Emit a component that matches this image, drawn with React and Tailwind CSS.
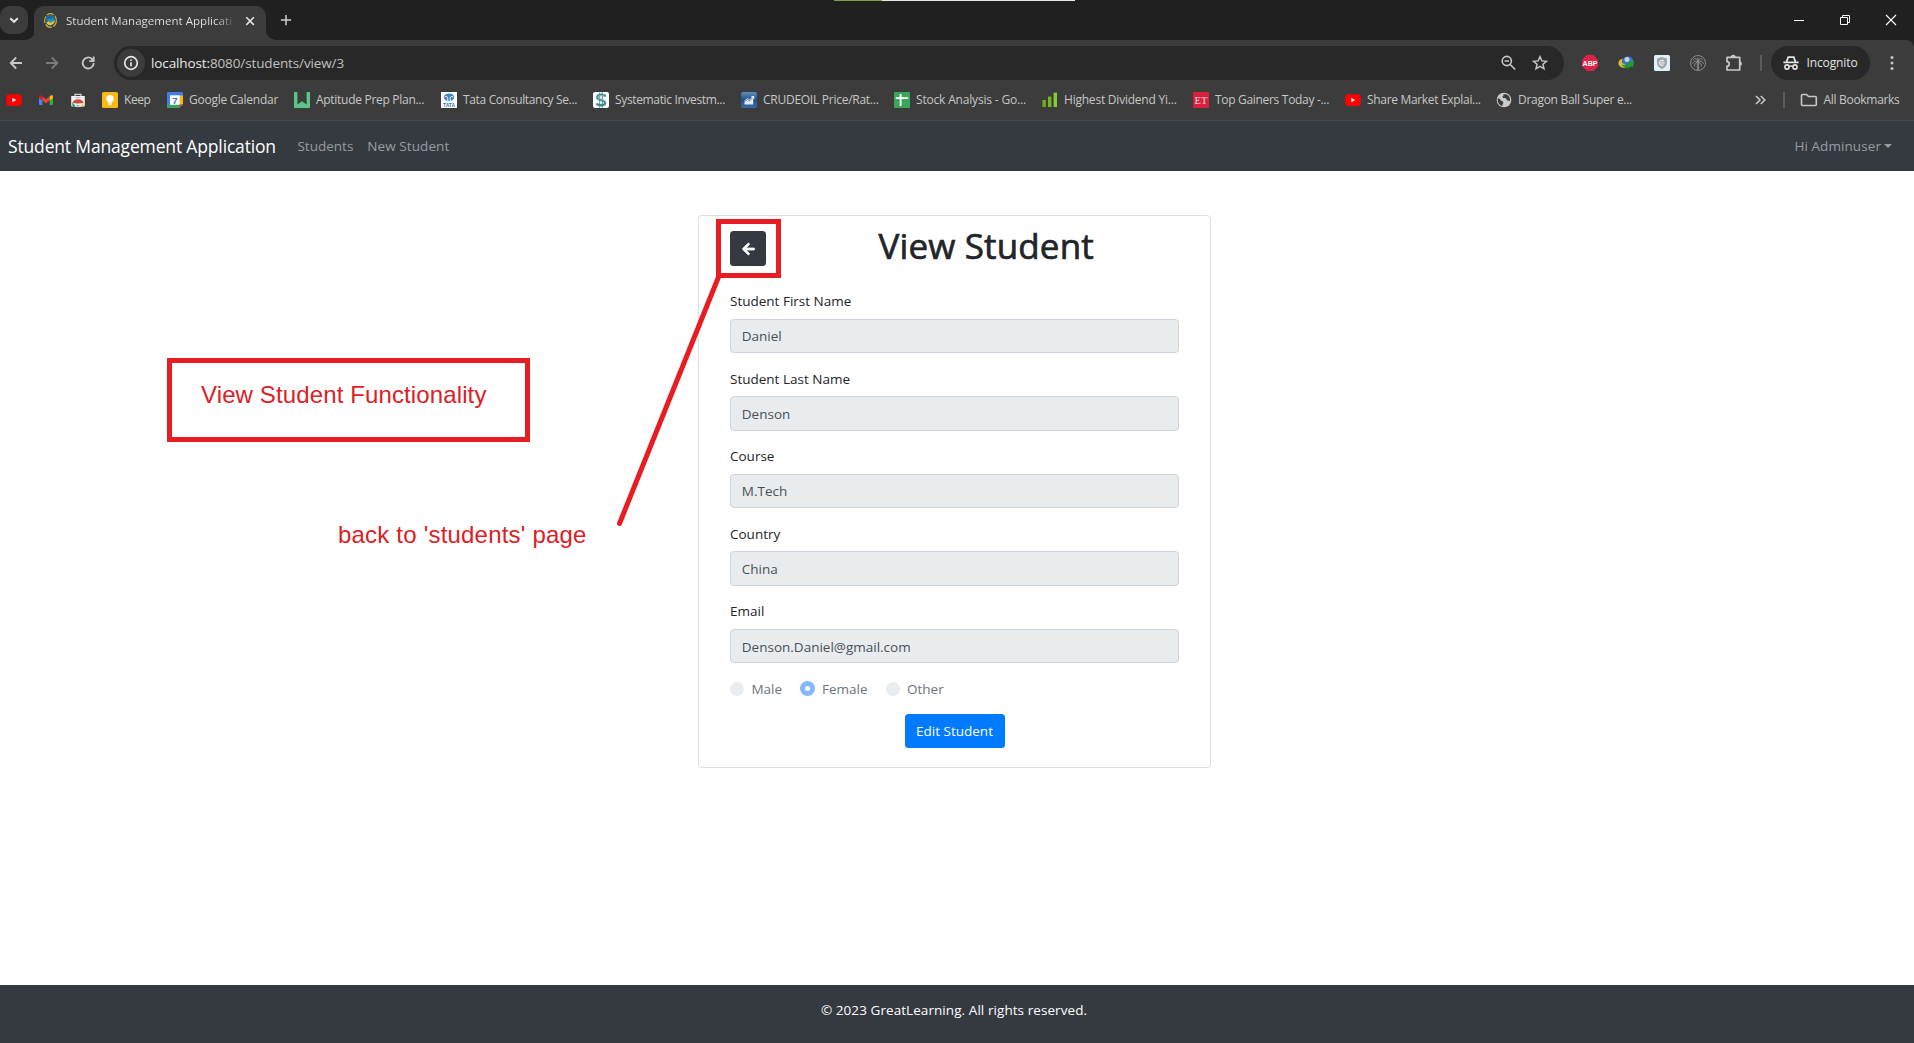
import React from "react";

const stroke = { fill: "none", stroke: "currentColor", strokeWidth: 2 };

/* ---------- favicons ---------- */

function YoutubeIcon() {
  return (
    <svg className="size-4 shrink-0" viewBox="0 0 16 16">
      <rect x="0.2" y="2.3" width="15.6" height="11.6" rx="3.4" fill="#ff0000" />
      <path d="M6.4 5.9v4.4L10.2 8.1z" fill="#fff" />
    </svg>
  );
}

function GmailIcon() {
  return (
    <svg className="size-4 shrink-0" viewBox="0 0 16 16">
      <path d="M1 4v8.200c0 .5.4.8.8.8h2.500V6.600z" fill="#4285f4" />
      <path d="M15 4v8.200c0 .5-.4.8-.8.8h-2.500V6.600z" fill="#34a853" />
      <path d="M4.300 4.400v4L8 11.200l3.700-2.800v-4L8 7.200z" fill="#ea4335" />
      <path d="M1 4.200v1.700l3.300 2.500v-4l-1-.8C2.400 2.900 1 3.300 1 4.200z" fill="#c5221f" />
      <path d="M15 4.200v1.700l-3.300 2.500v-4l1-.8c.9-.7 2.300-.3 2.300.6z" fill="#fbbc04" />
    </svg>
  );
}

function WebStoreIcon() {
  return (
    <svg className="size-4 shrink-0" viewBox="0 0 16 16">
      <path d="M5 4V2.300h6V4" fill="none" stroke="#c9ccd0" strokeWidth="1.300" />
      <path d="M1.200 4h13.600v9.600a1 1 0 0 1-1 1H2.200a1 1 0 0 1-1-1z" fill="#f1f3f4" />
      <rect x="5.500" y="5" width="5" height="1.200" rx=".6" fill="#bdc1c6" />
      <path d="M2.600 11a5.500 4.600 0 0 1 10.800 0l-5.400.6z" fill="#db4437" />
      <path d="M2.500 10.400l3.200 4.200H2.900c-.6-1.300-.8-2.700-.4-4.200z" fill="#0f9d58" />
      <path d="M13.500 10.400l-3.200 4.200h2.800c.6-1.300.8-2.700.4-4.200z" fill="#ffcd40" />
      <path d="M5.600 14.600a2.500 2.600 0 0 1 4.800 0z" fill="#4285f4" stroke="#fff" strokeWidth=".7" />
    </svg>
  );
}

function KeepIcon() {
  return (
    <svg className="size-4 shrink-0" viewBox="0 0 16 16">
      <rect width="16" height="16" rx="1.500" fill="#f5ba14" />
      <circle cx="8" cy="6.800" r="3.700" fill="#fff" />
      <rect x="6.200" y="9.500" width="3.600" height="3.300" fill="#fff" />
      <path d="M6.200 11.200h3.600" stroke="#f5ba14" strokeWidth=".5" />
    </svg>
  );
}

function CalendarIcon() {
  return (
    <svg className="size-4 shrink-0" viewBox="0 0 16 16">
      <path d="M1.200 0h13.600A1.200 1.200 0 0 1 16 1.200V12.500H12.500V16H1.200A1.200 1.200 0 0 1 0 14.800V1.200A1.200 1.200 0 0 1 1.200 0z" fill="#3f7ee8" />
      <path d="M12.700 3.500H16v9h-3.300z" fill="#fbbc04" />
      <path d="M0 12.700h12.500V16H1.200A1.200 1.200 0 0 1 0 14.800z" fill="#34a853" />
      <path d="M12.500 12.500H16L12.500 16z" fill="#ea4335" />
      <rect x="3" y="3.300" width="9.800" height="9.500" fill="#fff" />
      <text x="8" y="11.600" textAnchor="middle" className="fill-[#3b6fc9] font-['Liberation_Sans'] text-[9.500px] font-bold">7</text>
    </svg>
  );
}

function PrepIcon() {
  return (
    <svg className="size-4 shrink-0" viewBox="0 0 16 16">
      <path d="M0 .8A.8.8 0 0 1 .8 0h1.800a.8.8 0 0 1 .8.8v11.600L8 9.200l4.600 3.200V.8a.8.8 0 0 1 .8-.8h1.800a.8.8 0 0 1 .8.800v14.400a.8.8 0 0 1-.8.8H.8a.8.8 0 0 1-.8-.8z" fill="#5cc489" />
    </svg>
  );
}

function TataIcon() {
  return (
    <svg className="size-4 shrink-0" viewBox="0 0 16 16">
      <rect width="16" height="16" fill="#fff" />
      <ellipse cx="8" cy="5.300" rx="5.200" ry="3.900" fill="#3f86c0" />
      <path d="M3.600 5.200C5.200 4 6.800 4.300 6.800 6.300v3.500M12.400 5.200C10.800 4 9.200 4.300 9.200 6.300v3.500" fill="none" stroke="#fff" strokeWidth=".9" />
      <text x="8" y="14.600" textAnchor="middle" className="fill-[#2f78b7] font-['Liberation_Sans'] text-[4.900px] font-bold">TATA</text>
    </svg>
  );
}

function DollarIcon() {
  return (
    <svg className="size-4 shrink-0" viewBox="0 0 16 16">
      <rect width="16" height="16" rx="2" fill="#fff" />
      <path d="M12.300 4.600C11.500 2.600 4.300 2 4.200 5.200c-.1 3.200 8 2 8 5.600 0 3.300-7.600 3-8.500.6" fill="none" stroke="#3c8f8c" strokeWidth="2.300" />
      <path d="M6.700.3v15.400M9.300.3v15.400" stroke="#4a7fa0" strokeWidth=".9" />
      <path d="M11.600 4.500C10.500 3 5 3 5 5.200c0 2.500 7.900 2 7.900 5.600" fill="none" stroke="#d7efe9" strokeWidth=".5" />
    </svg>
  );
}

function CrudeIcon() {
  return (
    <svg className="size-4 shrink-0" viewBox="0 0 16 16">
      <defs>
        <linearGradient id="crude" x1="0" y1="0" x2="0" y2="1">
          <stop offset="0" stopColor="#5f8fbd" />
          <stop offset=".5" stopColor="#1f4f85" />
          <stop offset="1" stopColor="#346da6" />
        </linearGradient>
      </defs>
      <rect width="16" height="16" rx="2" fill="url(#crude)" />
      <path d="M3.500 12.500V8.600L6.500 6l2 1.600L11 4.900 9.800 4h3.400v3.600L12.200 6.500v6z" fill="#e4edf6" />
      <path d="M3.500 9.800L6.500 7.300l2 1.600 3-3" fill="none" stroke="#2d5f96" strokeWidth=".8" />
    </svg>
  );
}

function SheetIcon() {
  return (
    <svg className="size-4 shrink-0" viewBox="0 0 16 16">
      <rect width="16" height="16" rx="1.300" fill="#3ba55a" />
      <path d="M1.800 6.200h12.400M6.600 2v12" stroke="#fff" strokeWidth="1.800" />
    </svg>
  );
}

function BarsIcon() {
  return (
    <svg className="size-4 shrink-0" viewBox="0 0 16 16">
      <rect x="0.500" y="8" width="3.300" height="7" fill="#6fae1f" />
      <rect x="6" y="4.600" width="3.400" height="10.400" fill="#76b824" />
      <rect x="11.600" y=".6" width="3.400" height="14.400" fill="#86cc33" />
    </svg>
  );
}

function EconomicIcon() {
  return (
    <svg className="size-4 shrink-0" viewBox="0 0 16 16">
      <rect width="16" height="16" fill="#d8213f" />
      <text x="8" y="12" textAnchor="middle" className="fill-[#f9d5da] font-['Liberation_Serif'] text-[10.500px]">ET</text>
    </svg>
  );
}

function GlobeIcon() {
  return (
    <svg className="size-4 shrink-0" viewBox="0 0 16 16">
      <circle cx="8" cy="8" r="7.300" fill="#c8cacd" />
      <path d="M1.800 6.200c2 .3 3 1.300 3.200 2.600 1.700.2 2.400 1 2.200 2.300-.1 1-.9 1.300-.9 2.900C3 13.200 1.300 10 1.800 6.200zM7.400 2.300c.2 1.200 0 1.900-1 2.200 0 1.500.8 1.700 2.300 1.600 1.600-.1 1.900 1 2 2.200l3.300.6c.5-2.900-.9-5.400-3.300-6.400-1-.4-2.200-.5-3.300-.2z" fill="#3c3c3c" />
    </svg>
  );
}

const iconBookmarks = [YoutubeIcon, GmailIcon, WebStoreIcon];

const bookmarks = [
  { Icon: KeepIcon, label: "Keep", width: "w-[65px]", tracking: "tracking-[-0.450px]" },
  { Icon: CalendarIcon, label: "Google Calendar", width: "w-[127px]", tracking: "tracking-[-0.250px]" },
  { Icon: PrepIcon, label: "Aptitude Prep Plan...", width: "w-[147px]", tracking: "tracking-[-0.290px]" },
  { Icon: TataIcon, label: "Tata Consultancy Se...", width: "w-[152px]", tracking: "tracking-[-0.340px]" },
  { Icon: DollarIcon, label: "Systematic Investm...", width: "w-[148px]", tracking: "tracking-[-0.350px]" },
  { Icon: CrudeIcon, label: "CRUDEOIL Price/Rat...", width: "w-[153px]", tracking: "tracking-[-0.260px]" },
  { Icon: SheetIcon, label: "Stock Analysis - Go...", width: "w-[148px]", tracking: "tracking-[-0.180px]" },
  { Icon: BarsIcon, label: "Highest Dividend Yi...", width: "w-[151px]", tracking: "tracking-[-0.220px]" },
  { Icon: EconomicIcon, label: "Top Gainers Today -...", width: "w-[152px]", tracking: "tracking-[-0.310px]" },
  { Icon: YoutubeIcon, label: "Share Market Explai...", width: "w-[151px]", tracking: "tracking-[-0.320px]" },
  { Icon: GlobeIcon, label: "Dragon Ball Super e...", width: "w-[151px]", tracking: "tracking-[-0.290px]" },
];

/* ---------- browser chrome ---------- */

function TabStrip() {
  return (
    <div className="relative flex h-10 bg-[#202020]">
      <div className="absolute top-0 left-[834px] flex h-px w-[241px]">
        <div className="w-12 bg-[#7fa046]" />
        <div className="flex-1 bg-[#e6e8e4]" />
      </div>
      <button className="mt-1.5 flex h-7 w-7 items-center justify-center rounded-[10px] bg-[#3c3c3c] text-[#e3e3e3]">
        <svg className="size-3" viewBox="0 0 12 12" {...stroke}><path d="M2.200 4.200L6 7.800l3.800-3.600" /></svg>
      </button>
      <svg className="mt-[30px] -mr-px ml-[-3px] h-[10px] w-[10px]" viewBox="0 0 10 10">
        <path d="M10 0v10H0A10 10 0 0 0 10 0z" fill="#3c3c3c" />
      </svg>
      <div className="mt-1.5 flex h-[34px] w-[232px] items-center rounded-t-[10px] bg-[#3c3c3c] pr-[10px] pb-[5px] pl-[10px]">
        <svg className="h-[15px] w-[13px]" viewBox="0 0 13 15">
          <ellipse cx="6.500" cy="7.500" rx="5.800" ry="6.800" fill="none" stroke="#d2b32c" strokeWidth="1.200" strokeDasharray="7 1.500" />
          <ellipse cx="6.500" cy="7.200" rx="5" ry="5.500" fill="#1d6ca0" />
          <path d="M2.500 9.500l2.200-1.200 2 1.400L10.800 7C10.700 10 8.600 12.200 6.300 12.200 4.500 12.200 3 11.200 2.500 9.500z" fill="#e7c53a" />
          <path d="M3 5.500l3.500 1L10 5 8 9 5.500 8.800z" fill="#2a9ab8" />
        </svg>
        <span className="ml-[9px] w-[171px] overflow-hidden bg-linear-to-r from-[#e3e3e3] from-88% to-[#3c3c3c] to-100% bg-clip-text text-[11.500px] leading-5 tracking-[0.030px] whitespace-nowrap text-transparent">
          Student Management Applicati
        </span>
        <svg className="ml-[7.500px] size-3 text-[#e3e3e3]" viewBox="0 0 12 12" {...stroke} strokeWidth="1.600"><path d="M2.300 2.300l7.600 7.600M9.900 2.300L2.300 9.900" /></svg>
      </div>
      <svg className="mt-[30px] h-[10px] w-[10px]" viewBox="0 0 10 10">
        <path d="M0 0v10h10A10 10 0 0 1 0 0z" fill="#3c3c3c" />
      </svg>
      <svg className="mt-[14px] ml-[4px] h-[12px] w-[12px] text-[#d0d0d0]" viewBox="0 0 12 12" {...stroke} strokeWidth="1.500"><path d="M6 1v10.200M.9 6.100h10.200" /></svg>
      <div className="flex-1" />
      <div className="flex h-10 w-[138px] text-white">
        <svg className="h-10 w-[46px]" viewBox="0 0 46 40" {...stroke} strokeWidth="1"><path d="M18 20.500h10" /></svg>
        <svg className="h-10 w-[46px]" viewBox="0 0 46 40" {...stroke} strokeWidth="1"><path d="M18.500 17.500h7v7h-7zM20.500 17.500v-2h7v7h-2" /></svg>
        <svg className="h-10 w-[46px]" viewBox="0 0 46 40" {...stroke} strokeWidth="1.100"><path d="M18 15l10 10M28 15L18 25" /></svg>
      </div>
    </div>
  );
}

function Toolbar() {
  return (
    <div className="flex h-10 items-center rounded-tr-[8px] bg-[#3c3c3c] pt-1.5 text-[#c7c7c7]">
      <svg className="ml-[9px] h-4 w-[14px]" viewBox="0 0 14 16" {...stroke} strokeWidth="1.800"><path d="M13 8H2M7.200 2.500L1.700 8l5.500 5.500" /></svg>
      <svg className="ml-[22px] h-4 w-[14px] text-[#7b7b7b]" viewBox="0 0 14 16" {...stroke} strokeWidth="1.800"><path d="M1 8h11M6.800 2.500L12.300 8l-5.500 5.500" /></svg>
      <svg className="ml-[21px] size-4" viewBox="0 0 16 16" {...stroke} strokeWidth="1.800"><path d="M13.700 8A5.500 5.500 0 1 1 12 4l1.600 1.600M13.700 1.600v4.500H9.200" /></svg>
      <div className="ml-[18px] flex h-[34px] w-[1450px] items-center rounded-full bg-[#282828] pl-[3px]">
        <div className="flex size-7 items-center justify-center rounded-full bg-[#3c3c3c] text-[#e3e3e3]">
          <svg className="size-4" viewBox="0 0 16 16" {...stroke} strokeWidth="1.700">
            <circle cx="8" cy="8" r="6.300" />
            <path d="M8 7.300v4M8 4.500v1.600" />
          </svg>
        </div>
        <span className="ml-[6px] text-[13.500px] tracking-[-0.120px] text-[#c0c0c0]">
          <span className="text-[#e8e8e8]">localhost:</span>8080/students/view/3
        </span>
        <div className="flex-1" />
        <svg className="mr-[16px] size-4" viewBox="0 0 16 16" {...stroke} strokeWidth="1.600">
          <circle cx="6.800" cy="6" r="4.600" />
          <path d="M10.200 9.500l5 5M4.600 6h4.400" />
        </svg>
        <svg className="mr-4 size-4" viewBox="0 0 16 16" {...stroke} strokeWidth="1.500">
          <path d="M8 1.700l1.900 4.200 4.500.4-3.400 3 1 4.500L8 11.400l-4 2.400 1-4.500-3.400-3 4.500-.4z" />
        </svg>
      </div>
      <svg className="ml-[18px] size-4" viewBox="0 0 16 16">
        <path d="M4.700 0h6.600L16 4.700v6.600L11.300 16H4.700L0 11.300V4.700z" fill="#df2347" />
        <text x="8" y="10.600" textAnchor="middle" className="fill-white font-['Liberation_Sans'] text-[7px] font-bold">ABP</text>
      </svg>
      <svg className="ml-5 size-4" viewBox="0 0 16 16">
        <circle cx="10" cy="6.500" r="5.300" fill="#3c78c8" />
        <circle cx="9" cy="4.500" r="2.500" fill="#b9d7ee" />
        <path d="M5 3.500C.5 4.500-.8 8.500 1.500 11c2 2 5.500 2 7 1.500L6.500 9C4 9 3.500 6 5 3.500z" fill="#d6bd3e" />
        <path d="M3.500 9c2 1.800 5.500 1.500 7-.5L9 7l7-.8-.8 6.300-1.500-1.300c-3 2.800-8.700 2.300-10.200-2.200z" fill="#209a2c" />
        <path d="M8 12.500h5l-3.500 2.500z" fill="#15731f" />
      </svg>
      <svg className="ml-5 size-4" viewBox="0 0 16 16">
        <rect width="16" height="16" rx="1.500" fill="#dff1fa" />
        <path d="M8 2l5 1.500v4.300c0 3-2 5.200-5 6.300-3-1.100-5-3.300-5-6.300V3.500z" fill="#a3a6a8" />
        <path d="M9.700 6A2.400 2.400 0 1 0 9.700 9.600M7.200 7.800h3.400" fill="none" stroke="#eee" strokeWidth="1.200" />
      </svg>
      <svg className="ml-5 size-4 text-[#949494]" viewBox="0 0 16 16" {...stroke} strokeWidth=".9">
        <circle cx="8" cy="8" r="7.500" />
        <path d="M7.300 7v8M8.700 7v8M8 6.200C6.500 3 4.500 3 3 5.200M8 6.200C9.500 3 11.500 3 13 5.200M8 6.500C5.500 5.500 3 6.500 2.500 8.800M8 6.500c2.500-1 5 0 5.500 2.300M8 7C5.500 7.500 4.400 9.500 4.500 11.500M8 7c2.500.5 3.600 2.500 3.500 4.500M8 6V2.500" />
      </svg>
      <svg className="ml-[19px] h-[18px] w-[18px]" viewBox="0 0 18 18" {...stroke} strokeWidth="1.700">
        <path d="M2 3.400h12.700V16H2v-3.800c3-.2 3-4.400 0-4.600z" strokeLinejoin="round" />
        <path d="M6.400 2.600a2 2 0 0 1 3.600 0zM15.400 7.900a2 2 0 0 1 0 3.400z" fill="currentColor" strokeWidth="1.200" />
      </svg>
      <div className="ml-[17px] h-4 w-0.5 bg-[#5c5c5c]" />
      <div className="ml-[9px] flex h-[34px] w-[99px] items-center rounded-full bg-[#282828] pl-3 text-[#e3e3e3]">
        <svg className="h-4 w-4" viewBox="0 0 16 16">
          <path d="M.4 7.300h15.200M3.600 6.600L5.200 2.200h5.600l1.600 4.400" {...stroke} strokeWidth="1.700" />
          <circle cx="4" cy="12" r="2.100" {...stroke} strokeWidth="1.600" />
          <circle cx="12" cy="12" r="2.100" {...stroke} strokeWidth="1.600" />
          <path d="M6 11.500q2-1 4 0" {...stroke} strokeWidth="1.300" />
        </svg>
        <span className="ml-[7.500px] text-[12px] tracking-[-0.120px]">Incognito</span>
      </div>
      <svg className="ml-[20px] h-4 w-1" viewBox="0 0 4 16" fill="currentColor">
        <circle cx="2" cy="2.600" r="1.500" />
        <circle cx="2" cy="8" r="1.500" />
        <circle cx="2" cy="13.400" r="1.500" />
      </svg>
    </div>
  );
}

function BookmarksBar() {
  return (
    <div className="flex h-[41px] items-center border-b border-[#474a4a] bg-[#3c3c3c] pl-1.5 text-[12px] whitespace-nowrap text-[#c7c7c7]">
      {iconBookmarks.map((Icon, i) => (
        <div key={i} className="w-8"><Icon /></div>
      ))}
      {bookmarks.map(({ Icon, label, width, tracking }) => (
        <div key={label} className={`${width} flex shrink-0 items-center gap-1.5`}>
          <Icon />
          <span className={tracking}>{label}</span>
        </div>
      ))}
      <div className="flex-1" />
      <svg className="h-3 w-[11px]" viewBox="0 0 11 12" {...stroke} strokeWidth="1.600"><path d="M1 2l4 4-4 4M5.800 2l4 4-4 4" /></svg>
      <div className="ml-[17px] h-4 w-0.5 bg-[#5c5c5c]" />
      <svg className="ml-[15px] h-4 w-[18px]" viewBox="0 0 18 16" {...stroke} strokeWidth="1.600">
        <path d="M1.500 3.500a1 1 0 0 1 1-1h4l2 2h6.800a1 1 0 0 1 1 1v7a1 1 0 0 1-1 1H2.500a1 1 0 0 1-1-1z" />
      </svg>
      <span className="mr-[14.500px] ml-[6px] tracking-[-0.310px]">All Bookmarks</span>
    </div>
  );
}

/* ---------- application ---------- */

function Navbar() {
  return (
    <nav className="flex h-[50px] items-center bg-[#343a40] pl-[8px] text-[13.500px] text-[#999c9f]">
      <span className="text-[17.500px] tracking-[-0.160px] text-white">Student Management Application</span>
      <span className="ml-[21.500px]">Students</span>
      <span className="ml-[14px] tracking-[0.080px]">New Student</span>
      <span className="ml-auto tracking-[0.080px]">Hi Adminuser</span>
      <span className="mr-[22px] ml-[3px] border-x-[4px] border-t-[4px] border-x-transparent border-t-current" />
    </nav>
  );
}

function Field({ label, value }) {
  return (
    <div className="mb-[14.400px]">
      <label className="block pt-px pb-[6.200px] leading-[21.600px]">{label}</label>
      <div className="flex h-[34.400px] items-center rounded-[4px] border border-[#ced4da] bg-[#e9ecef] px-[10.800px] pt-px text-[#495057]">
        {value}
      </div>
    </div>
  );
}

function Radio({ label, checked }) {
  return (
    <label className="flex items-center gap-[7px] text-[#6c757d]">
      {checked ? (
        <span className="flex size-[15px] items-center justify-center rounded-full bg-[#85b8f6]">
          <span className="size-[5px] rounded-full bg-white" />
        </span>
      ) : (
        <span className="size-[14.400px] rounded-full bg-[#e9ecef]" />
      )}
      {label}
    </label>
  );
}

function StudentCard() {
  return (
    <section className="mt-[44px] ml-[698px] h-[553px] w-[513px] rounded-[4px] border border-[#dfdfdf] bg-white px-[31px] text-[13.500px] text-[#212529]">
      <div className="flex h-[74px] pt-[15px]">
        <button className="flex h-[35px] w-9 items-center justify-center rounded-[3.500px] bg-[#343a40] text-white">
          <svg className="h-[14px] w-[13px]" viewBox="0 0 448 512" fill="currentColor" stroke="currentColor" strokeWidth="24">
            <path d="M257.500 445.100l-22.200 22.200c-9.400 9.400-24.600 9.400-33.900 0L7 273c-9.400-9.400-9.400-24.600 0-33.900L201.400 44.700c9.400-9.400 24.600-9.400 33.900 0l22.200 22.200c9.500 9.500 9.300 25-.4 34.300L136.600 216H424c13.300 0 24 10.700 24 24v32c0 13.300-10.700 24-24 24H136.600l120.500 114.800c9.800 9.300 10 24.800.4 34.300z" />
          </svg>
        </button>
        <h1 className="-mt-[9px] ml-[112.500px] text-[35px] leading-[48px] tracking-[0.140px] [-webkit-text-stroke:0.700px_#212529]">View Student</h1>
      </div>
      <Field label="Student First Name" value="Daniel" />
      <Field label="Student Last Name" value="Denson" />
      <Field label="Course" value="M.Tech" />
      <Field label="Country" value="China" />
      <Field label="Email" value="Denson.Daniel@gmail.com" />
      <div className="flex h-[22px] items-center gap-[18px]">
        <Radio label="Male" />
        <Radio label="Female" checked />
        <Radio label="Other" />
      </div>
      <div className="mt-[14px] flex justify-center">
        <button className="h-[34px] w-[100px] rounded-[3.500px] bg-[#007bff] text-white">Edit Student</button>
      </div>
    </section>
  );
}

/* Call-outs drawn over the page */
function Annotations() {
  return (
    <div className="font-['Liberation_Sans',Arial,sans-serif] text-[24px] leading-7 whitespace-nowrap text-[#dc2026]">
      <div className="absolute top-[358px] left-[167px] h-[84px] w-[363px] border-[5px] border-[#e81c23] pt-[18px] pl-[29px] tracking-[0.120px]">
        View Student Functionality
      </div>
      <div className="absolute top-[521px] left-[338px] tracking-[0.200px]">back to 'students' page</div>
      <div className="absolute top-[219px] left-[716px] h-[59px] w-[65px] border-[5px] border-[#e81c23]" />
      <svg className="absolute top-[270px] left-[610px] h-[260px] w-[115px]" viewBox="0 0 115 260">
        <path d="M108.500 7L9.500 253.500" stroke="#e81c23" strokeWidth="5" strokeLinecap="round" />
      </svg>
    </div>
  );
}

export default function App() {
  return (
    <div className="relative flex h-[1043px] w-[1914px] flex-col overflow-hidden bg-white font-['Open_Sans','Noto_Sans',sans-serif]">
      <header className="bg-[#202020]">
        <TabStrip />
        <Toolbar />
        <BookmarksBar />
      </header>
      <Navbar />
      <main className="flex-1">
        <StudentCard />
      </main>
      <footer className="h-[58px] bg-[#343a40] pt-[15px] pr-[6px] text-center text-[13.500px] leading-5 tracking-[0.070px] text-white">
        © 2023 GreatLearning. All rights reserved.
      </footer>
      <Annotations />
    </div>
  );
}
